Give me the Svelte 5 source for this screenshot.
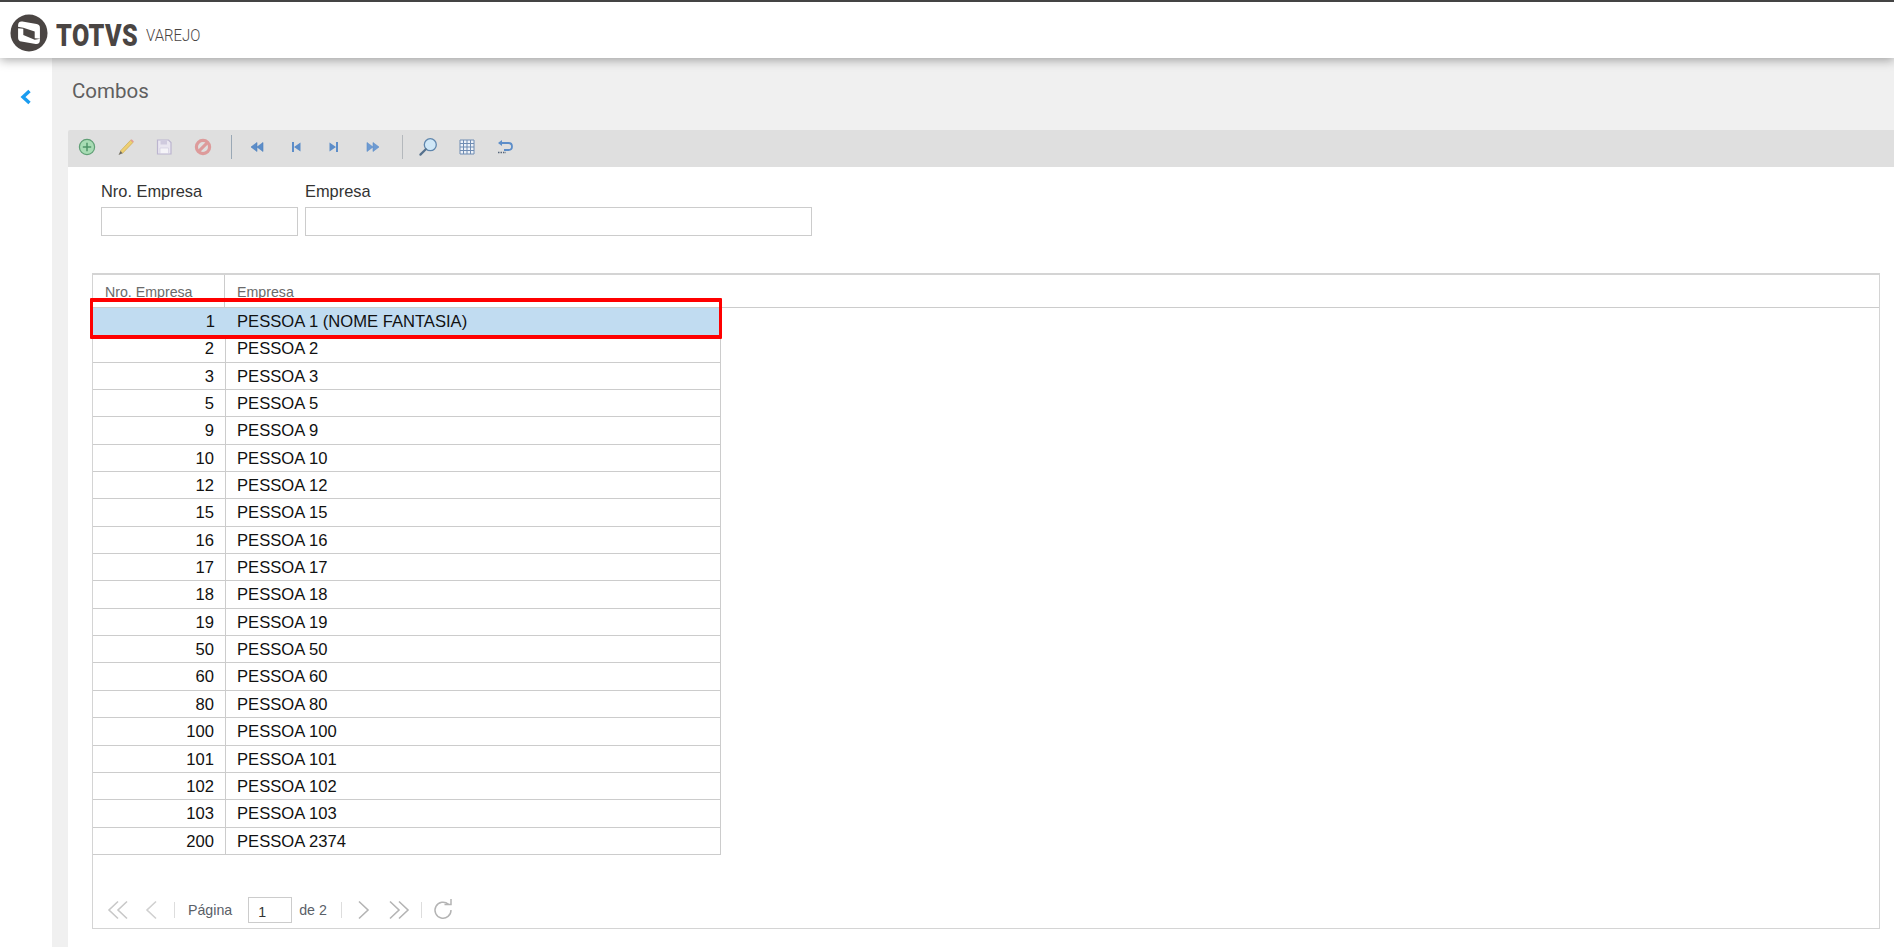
<script lang="ts">
  const rows = [
    [1, 'PESSOA 1 (NOME FANTASIA)'],
    [2, 'PESSOA 2'],
    [3, 'PESSOA 3'],
    [5, 'PESSOA 5'],
    [9, 'PESSOA 9'],
    [10, 'PESSOA 10'],
    [12, 'PESSOA 12'],
    [15, 'PESSOA 15'],
    [16, 'PESSOA 16'],
    [17, 'PESSOA 17'],
    [18, 'PESSOA 18'],
    [19, 'PESSOA 19'],
    [50, 'PESSOA 50'],
    [60, 'PESSOA 60'],
    [80, 'PESSOA 80'],
    [100, 'PESSOA 100'],
    [101, 'PESSOA 101'],
    [102, 'PESSOA 102'],
    [103, 'PESSOA 103'],
    [200, 'PESSOA 2374']
  ];
</script>

<div class="page">
  <header class="topbar">
    <svg class="logo" width="38" height="38" viewBox="0 0 40 40">
      <circle cx="20" cy="20" r="19.5" fill="#4a4543" />
      <path d="M8.5 12 Q8.5 7.5 13 8 L28 10.5 Q31.5 11 31.5 14.5 V27 Q31.5 32 27 31.5 L12 29 Q8.5 28.5 8.5 25 Z" fill="#fff" />
      <path d="M8 13.5 L14 14.5 L26 18.5 V25.5 L32 26 L26 27 L14 22 V15.5 L8 15 Z" fill="#4a4543" />
    </svg>
    <span class="brand">TOTVS</span>
    <span class="product">VAREJO</span>
  </header>

  <div class="content">
    <aside class="sidebar">
      <svg width="14" height="16" viewBox="0 0 14 16">
        <path d="M10.5 2 L4 8 L10.5 14" fill="none" stroke="#1a9cf0" stroke-width="3.4" />
      </svg>
    </aside>

    <main class="main">
      <h1>Combos</h1>

      <div class="toolbar">
        <button class="tool" aria-label="Incluir">
          <svg width="18" height="18" viewBox="0 0 18 18">
            <circle cx="9" cy="9" r="7.6" fill="#a8dcb4" stroke="#5f9f75" stroke-width="1.2" />
            <path d="M9 4.8 V13.2 M4.8 9 H13.2" stroke="#4f9468" stroke-width="1.5" />
          </svg>
        </button>
        <button class="tool" aria-label="Editar">
          <svg width="18" height="18" viewBox="0 0 18 18">
            <path d="M3.4 13 L13.6 2.2 L16 4.4 L5.6 15.2 Z" fill="#eecf72" stroke="#c9ab58" stroke-width=".7" />
            <path d="M13.6 2.2 L14.6 1.2 L16.9 3.4 L16 4.4 Z" fill="#e39a92" />
            <path d="M3.4 13 L5.6 15.2 L1.6 17 Z" fill="#6f6a5c" />
          </svg>
        </button>
        <button class="tool" aria-label="Salvar">
          <svg width="18" height="18" viewBox="0 0 18 18">
            <path d="M2.5 2 H13.5 L16 4.5 V16 H2.5 Z" fill="#e9e6f0" stroke="#bcb5cf" stroke-width="1.2" />
            <path d="M5.5 2.5 H12 V6.5 H5.5 Z" fill="#cfcade" />
            <path d="M5 10 H13.5 V15.5 H5 Z" fill="#f5f4f8" stroke="#cfcade" stroke-width=".6" />
          </svg>
        </button>
        <button class="tool" aria-label="Cancelar">
          <svg width="18" height="18" viewBox="0 0 18 18">
            <circle cx="9" cy="9" r="6.6" fill="none" stroke="#dd9b9b" stroke-width="3.2" />
            <path d="M4.6 13.4 L13.4 4.6" stroke="#dd9b9b" stroke-width="3" />
          </svg>
        </button>
        <span class="sep"></span>
        <button class="tool" aria-label="Primeiro">
          <svg width="14" height="12" viewBox="0 0 14 12">
            <path d="M7 1.5 L1 6 L7 10.5 Z M13 1.5 L7 6 L13 10.5 Z" fill="#5c8dc9" stroke="#4d7fbe" stroke-width=".6" />
          </svg>
        </button>
        <button class="tool" aria-label="Anterior">
          <svg width="14" height="12" viewBox="0 0 14 12">
            <path d="M3 1 H5 V11 H3 Z M11.5 1.5 L5 6 L11.5 10.5 Z" fill="#5c8dc9" />
          </svg>
        </button>
        <button class="tool" aria-label="Proximo">
          <svg width="14" height="12" viewBox="0 0 14 12">
            <path d="M9 1 H11 V11 H9 Z M2.5 1.5 L9 6 L2.5 10.5 Z" fill="#5c8dc9" />
          </svg>
        </button>
        <button class="tool" aria-label="Ultimo">
          <svg width="14" height="12" viewBox="0 0 14 12">
            <path d="M1 1.5 L7 6 L1 10.5 Z M7 1.5 L13 6 L7 10.5 Z" fill="#6e9bd2" stroke="#5c8dc9" stroke-width=".6" />
          </svg>
        </button>
        <span class="sep second"></span>
        <button class="tool" aria-label="Pesquisar">
          <svg width="20" height="20" viewBox="0 0 20 20">
            <circle cx="12.3" cy="7.7" r="6" fill="#cfe7f7" stroke="#5f86ad" stroke-width="1.3" />
            <path d="M7.8 12.2 L2.4 17.6" stroke="#55718d" stroke-width="2.2" stroke-linecap="round" />
          </svg>
        </button>
        <button class="tool" aria-label="Grade">
          <svg width="16" height="16" viewBox="0 0 16 16">
            <path d="M1 1 H15 V15 H1 Z" fill="#eef2f8" />
            <path d="M1 1 H15 V15 H1 Z M4.5 1 V15 M8 1 V15 M11.5 1 V15 M1 4.5 H15 M1 8 H15 M1 11.5 H15" fill="none" stroke="#6f8cb3" stroke-width="1" />
          </svg>
        </button>
        <button class="tool" aria-label="Voltar">
          <svg width="18" height="16" viewBox="0 0 18 16">
            <path d="M6 1 L2 4 L6 7 Z" fill="#5c8dc9" />
            <path d="M5 4 H12.5 Q16 4 16 7.5 Q16 11 12.5 11 H8" fill="none" stroke="#5c8dc9" stroke-width="1.8" />
            <path d="M2 13.5 H10" stroke="#55657a" stroke-width="1.6" stroke-dasharray="1.5 1" />
          </svg>
        </button>
      </div>

      <section class="panel">
        <div class="filters">
          <div class="field">
            <label for="nro">Nro. Empresa</label>
            <input id="nro" class="nro" type="text" />
          </div>
          <div class="field">
            <label for="emp">Empresa</label>
            <input id="emp" class="emp" type="text" />
          </div>
        </div>

        <div class="grid-box">
          <div class="grid-head">
            <div class="hcol first">Nro. Empresa</div>
            <div class="hcol">Empresa</div>
          </div>
          <div class="grid-body">
            {#each rows as row, i}
              <div class="row" class:selected={i === 0}>
                <div class="num">{row[0]}</div>
                <div class="name">{row[1]}</div>
              </div>
            {/each}
            <div class="highlight"></div>
          </div>

          <div class="pager">
            <svg class="pg" width="22" height="20" viewBox="0 0 22 20">
              <path d="M11 1.5 L2 10 L11 18.5 M20 1.5 L11 10 L20 18.5" fill="none" stroke="#c8c8c8" stroke-width="1.6" />
            </svg>
            <svg class="pg prev" width="12" height="20" viewBox="0 0 12 20">
              <path d="M11 1.5 L2 10 L11 18.5" fill="none" stroke="#d0d0d0" stroke-width="1.6" />
            </svg>
            <span class="bar b1"></span>
            <span class="plabel">Página</span>
            <span class="pinput">1</span>
            <span class="plabel of">de 2</span>
            <span class="bar b2"></span>
            <svg class="pg next" width="12" height="20" viewBox="0 0 12 20">
              <path d="M1 1.5 L10 10 L1 18.5" fill="none" stroke="#b4b4b4" stroke-width="1.6" />
            </svg>
            <svg class="pg last" width="22" height="20" viewBox="0 0 22 20">
              <path d="M2 1.5 L11 10 L2 18.5 M11 1.5 L20 10 L11 18.5" fill="none" stroke="#b4b4b4" stroke-width="1.6" />
            </svg>
            <span class="bar b3"></span>
            <svg class="pg refresh" width="20" height="20" viewBox="0 0 20 20">
              <path d="M15.5 4.4 A8 8 0 1 0 18 10" fill="none" stroke="#b4b4b4" stroke-width="1.5" />
              <path d="M11.5 4.6 H18 V-1" fill="none" stroke="#b4b4b4" stroke-width="1.5" />
            </svg>
          </div>
        </div>
      </section>
    </main>
  </div>
</div>

<style>
  :global(body) {
    margin: 0;
    background: #fff;
    font-family: "Liberation Sans", Arial, sans-serif;
  }

  .page {
    height: 947px;
    display: flex;
    flex-direction: column;
    overflow: hidden;
  }

  .topbar {
    height: 56px;
    flex: none;
    display: flex;
    align-items: center;
    border-top: 2px solid #444;
    background: #fff;
    box-shadow: 0 2px 10px rgba(0, 0, 0, 0.35);
    position: relative;
    z-index: 2;
    box-sizing: content-box;
  }

  .logo {
    margin: 6px 0 0 10px;
  }

  .brand {
    margin: 10px 0 0 8px;
    font-family: "Roboto", sans-serif;
    font-weight: 900;
    font-size: 31px;
    letter-spacing: 0.5px;
    color: #4a4543;
    transform: scaleX(0.81);
    transform-origin: left;
  }

  .product {
    margin: 10px 0 0 -11px;
    font-family: "Roboto", sans-serif;
    font-weight: 300;
    font-size: 17px;
    color: #4a4543;
    transform: scaleX(0.88);
    transform-origin: left;
  }

  .content {
    flex: 1;
    display: flex;
    min-height: 0;
  }

  .sidebar {
    width: 52px;
    flex: none;
    background: #fff;
    display: flex;
    justify-content: center;
    align-items: flex-start;
    padding-top: 31px;
    box-sizing: border-box;
  }

  .sidebar svg {
    margin-left: -1px;
  }

  .main {
    flex: 1;
    min-width: 0;
    background: #f0f0f0;
    padding-left: 16px;
    display: flex;
    flex-direction: column;
  }

  h1 {
    margin: 0;
    padding: 22px 0 0 4px;
    height: 50px;
    box-sizing: content-box;
    font-family: "Roboto", sans-serif;
    font-weight: 400;
    font-size: 20.5px;
    line-height: 22px;
    color: #5f5f5f;
  }

  .toolbar {
    height: 37px;
    flex: none;
    background: #dfdfdf;
    display: flex;
    align-items: center;
    box-sizing: border-box;
    padding-bottom: 4px;
    border-radius: 2px 0 0 0;
  }

  .tool {
    width: 38.6px;
    height: 33px;
    flex: none;
    padding: 0;
    border: 0;
    background: transparent;
    display: flex;
    align-items: center;
    justify-content: center;
  }

  .sep {
    width: 1px;
    height: 24px;
    flex: none;
    background: #9aa8b5;
    margin: 0 5.3px 0 9px;
  }

  .sep.second {
    margin: 0 5.7px 0 10px;
    background: #b4b8bc;
  }

  .panel {
    flex: 1;
    background: #fff;
    padding: 0 14px 18px 24px;
    min-height: 0;
    display: flex;
    flex-direction: column;
  }

  .filters {
    display: flex;
    gap: 7px;
    margin-left: 9px;
    padding-top: 15px;
    height: 91px;
    box-sizing: content-box;
    flex: none;
  }

  .field {
    display: flex;
    flex-direction: column;
  }

  label {
    font-size: 16.4px;
    line-height: 18px;
    height: 25px;
    color: #333;
  }

  input {
    box-sizing: border-box;
    height: 29px;
    border: 1px solid #ccc;
    background: #fff;
    padding: 0 6px;
    border-radius: 0;
    outline: none;
  }

  .nro {
    width: 197px;
  }

  .emp {
    width: 507px;
  }

  .grid-box {
    flex: 1;
    border: 1px solid #d4d4d4;
    border-top-width: 2px;
    box-sizing: border-box;
    display: flex;
    flex-direction: column;
    min-height: 0;
  }

  .grid-head {
    height: 32px;
    flex: none;
    display: flex;
    border-bottom: 1px solid #ccc;
    box-sizing: content-box;
    font-size: 14.2px;
    color: #6a6a6a;
  }

  .hcol {
    padding: 9px 0 0 12px;
    line-height: 16px;
  }

  .hcol.first {
    width: 132px;
    padding-left: 12px;
    box-sizing: border-box;
    border-right: 1px solid #ccc;
    flex: none;
  }

  .grid-body {
    width: 628px;
    position: relative;
    flex: none;
    border-right: 1px solid #ccc;
    box-sizing: border-box;
  }

  .row {
    height: 27.35px;
    display: flex;
    align-items: center;
    box-sizing: border-box;
    border-bottom: 1px solid #ccc;
    font-size: 16.6px;
    color: #111;
  }

  .num {
    width: 133px;
    height: 100%;
    flex: none;
    box-sizing: border-box;
    padding: 4px 11px 0 0;
    text-align: right;
    border-right: 1px solid #ccc;
  }

  .name {
    padding: 4px 0 0 11px;
    height: 100%;
    box-sizing: border-box;
  }

  .row.selected {
    background: #c1dcf1;
    border-bottom: 0;
  }

  .row.selected .num {
    border-right: 0;
  }

  .highlight {
    position: absolute;
    left: -3px;
    top: -10px;
    width: 632px;
    height: 41px;
    box-sizing: border-box;
    border-style: solid;
    border-color: #f00;
    border-width: 4px 3px;
    border-radius: 1px;
  }

  .pager {
    display: flex;
    align-items: center;
    margin-top: 40px;
    height: 30px;
    padding-left: 14px;
    font-size: 14.2px;
    color: #555;
  }

  .prev {
    margin-left: 16px;
  }

  .bar {
    width: 1px;
    height: 16px;
    flex: none;
    background: #ddd;
  }

  .b1 {
    margin-left: 17px;
  }

  .b2 {
    margin-left: 14px;
  }

  .b3 {
    margin-left: 11px;
  }

  .plabel {
    margin-left: 13px;
    color: #5a6068;
  }

  .pinput {
    box-sizing: border-box;
    width: 44px;
    height: 26px;
    margin-left: 16px;
    border: 1px solid #ccc;
    padding: 6px 0 0 9px;
    color: #333;
    font-size: 14.2px;
    line-height: 16px;
  }

  .plabel.of {
    margin-left: 7px;
  }

  .next {
    margin-left: 16px;
  }

  .last {
    margin-left: 18px;
  }

  .refresh {
    margin-left: 11px;
    overflow: visible;
  }
</style>
